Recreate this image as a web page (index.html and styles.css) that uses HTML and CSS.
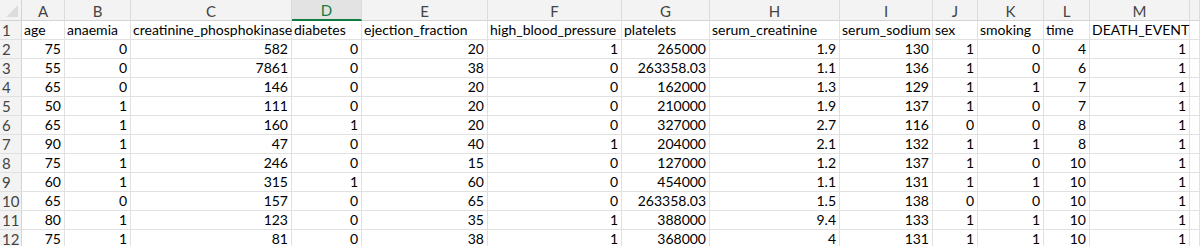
FILE: index.html
```html
<!DOCTYPE html>
<html lang="en">
<head>
<meta charset="utf-8">
<title>heart_failure_clinical_records</title>
<link rel="stylesheet" href="styles.css">
</head>
<body>
<div class="sheet">
  <div class="corner"><svg class="tri" width="14" height="14" viewBox="0 0 14 14"><polygon points="13,1 13,13 1,13" /></svg></div>
  <div class="colhead">A</div>
  <div class="colhead">B</div>
  <div class="colhead">C</div>
  <div class="colhead sel">D</div>
  <div class="colhead">E</div>
  <div class="colhead">F</div>
  <div class="colhead">G</div>
  <div class="colhead">H</div>
  <div class="colhead">I</div>
  <div class="colhead">J</div>
  <div class="colhead">K</div>
  <div class="colhead">L</div>
  <div class="colhead">M</div>
  <div class="colhead"></div>

  <div class="rowhead">1</div>
  <div class="cell">age</div><div class="cell">anaemia</div><div class="cell">creatinine_phosphokinase</div><div class="cell">diabetes</div><div class="cell">ejection_fraction</div><div class="cell">high_blood_pressure</div><div class="cell">platelets</div><div class="cell">serum_creatinine</div><div class="cell">serum_sodium</div><div class="cell">sex</div><div class="cell">smoking</div><div class="cell">time</div><div class="cell">DEATH_EVENT</div><div class="cell"></div>

  <div class="rowhead">2</div>
  <div class="cell num">75</div><div class="cell num">0</div><div class="cell num">582</div><div class="cell num">0</div><div class="cell num">20</div><div class="cell num">1</div><div class="cell num">265000</div><div class="cell num">1.9</div><div class="cell num">130</div><div class="cell num">1</div><div class="cell num">0</div><div class="cell num">4</div><div class="cell num">1</div><div class="cell"></div>

  <div class="rowhead">3</div>
  <div class="cell num">55</div><div class="cell num">0</div><div class="cell num">7861</div><div class="cell num">0</div><div class="cell num">38</div><div class="cell num">0</div><div class="cell num">263358.03</div><div class="cell num">1.1</div><div class="cell num">136</div><div class="cell num">1</div><div class="cell num">0</div><div class="cell num">6</div><div class="cell num">1</div><div class="cell"></div>

  <div class="rowhead">4</div>
  <div class="cell num">65</div><div class="cell num">0</div><div class="cell num">146</div><div class="cell num">0</div><div class="cell num">20</div><div class="cell num">0</div><div class="cell num">162000</div><div class="cell num">1.3</div><div class="cell num">129</div><div class="cell num">1</div><div class="cell num">1</div><div class="cell num">7</div><div class="cell num">1</div><div class="cell"></div>

  <div class="rowhead">5</div>
  <div class="cell num">50</div><div class="cell num">1</div><div class="cell num">111</div><div class="cell num">0</div><div class="cell num">20</div><div class="cell num">0</div><div class="cell num">210000</div><div class="cell num">1.9</div><div class="cell num">137</div><div class="cell num">1</div><div class="cell num">0</div><div class="cell num">7</div><div class="cell num">1</div><div class="cell"></div>

  <div class="rowhead">6</div>
  <div class="cell num">65</div><div class="cell num">1</div><div class="cell num">160</div><div class="cell num">1</div><div class="cell num">20</div><div class="cell num">0</div><div class="cell num">327000</div><div class="cell num">2.7</div><div class="cell num">116</div><div class="cell num">0</div><div class="cell num">0</div><div class="cell num">8</div><div class="cell num">1</div><div class="cell"></div>

  <div class="rowhead">7</div>
  <div class="cell num">90</div><div class="cell num">1</div><div class="cell num">47</div><div class="cell num">0</div><div class="cell num">40</div><div class="cell num">1</div><div class="cell num">204000</div><div class="cell num">2.1</div><div class="cell num">132</div><div class="cell num">1</div><div class="cell num">1</div><div class="cell num">8</div><div class="cell num">1</div><div class="cell"></div>

  <div class="rowhead">8</div>
  <div class="cell num">75</div><div class="cell num">1</div><div class="cell num">246</div><div class="cell num">0</div><div class="cell num">15</div><div class="cell num">0</div><div class="cell num">127000</div><div class="cell num">1.2</div><div class="cell num">137</div><div class="cell num">1</div><div class="cell num">0</div><div class="cell num">10</div><div class="cell num">1</div><div class="cell"></div>

  <div class="rowhead">9</div>
  <div class="cell num">60</div><div class="cell num">1</div><div class="cell num">315</div><div class="cell num">1</div><div class="cell num">60</div><div class="cell num">0</div><div class="cell num">454000</div><div class="cell num">1.1</div><div class="cell num">131</div><div class="cell num">1</div><div class="cell num">1</div><div class="cell num">10</div><div class="cell num">1</div><div class="cell"></div>

  <div class="rowhead">10</div>
  <div class="cell num">65</div><div class="cell num">0</div><div class="cell num">157</div><div class="cell num">0</div><div class="cell num">65</div><div class="cell num">0</div><div class="cell num">263358.03</div><div class="cell num">1.5</div><div class="cell num">138</div><div class="cell num">0</div><div class="cell num">0</div><div class="cell num">10</div><div class="cell num">1</div><div class="cell"></div>

  <div class="rowhead">11</div>
  <div class="cell num">80</div><div class="cell num">1</div><div class="cell num">123</div><div class="cell num">0</div><div class="cell num">35</div><div class="cell num">1</div><div class="cell num">388000</div><div class="cell num">9.4</div><div class="cell num">133</div><div class="cell num">1</div><div class="cell num">1</div><div class="cell num">10</div><div class="cell num">1</div><div class="cell"></div>

  <div class="rowhead">12</div>
  <div class="cell num">75</div><div class="cell num">1</div><div class="cell num">81</div><div class="cell num">0</div><div class="cell num">38</div><div class="cell num">1</div><div class="cell num">368000</div><div class="cell num">4</div><div class="cell num">131</div><div class="cell num">1</div><div class="cell num">1</div><div class="cell num">10</div><div class="cell num">1</div><div class="cell"></div>
</div>
</body>
</html>
```

FILE: styles.css
```css
html, body {
  margin: 0;
  padding: 0;
  background: #ffffff;
  overflow: hidden;
}

.sheet {
  display: grid;
  grid-template-columns: 22px 43px 66px 161px 70px 126px 134px 88px 130px 93px 45px 66px 46px 100px 1fr;
  grid-template-rows: 21px;
  grid-auto-rows: 19px;
  font-family: Lato, "Liberation Sans", sans-serif;
  font-size: 14px;
  color: #000000;
}

.corner {
  box-sizing: border-box;
  background: #f3f3f3;
  border-right: 1px solid #d4d4d4;
  border-bottom: 1px solid #d4d4d4;
  position: relative;
}

.tri {
  position: absolute;
  right: 2px;
  bottom: 2px;
  fill: #dcdcdc;
}

.colhead {
  box-sizing: border-box;
  background: #f3f3f3;
  border-right: 1px solid #dcdcdc;
  border-bottom: 1px solid #d4d4d4;
  color: #444444;
  font-size: 15px;
  display: flex;
  align-items: center;
  justify-content: center;
  padding-top: 1px;
}

.colhead.sel {
  background: #e3e3e3;
  color: #107c41;
  border-bottom: 2px solid #107c41;
}

.rowhead {
  box-sizing: border-box;
  background: #f3f3f3;
  border-right: 1px solid #d4d4d4;
  border-bottom: 1px solid #e0e0e0;
  color: #444444;
  font-size: 15px;
  display: flex;
  align-items: flex-end;
  padding-left: 2px;
  line-height: 18px;
}

.cell {
  box-sizing: border-box;
  border-right: 1px solid #e1e1e1;
  border-bottom: 1px solid #e1e1e1;
  padding: 0 2px 0 2px;
  line-height: 18px;
  white-space: nowrap;
  overflow: visible;
  display: flex;
  align-items: flex-end;
}

.cell.num {
  justify-content: flex-end;
  padding-right: 3px;
}
```
